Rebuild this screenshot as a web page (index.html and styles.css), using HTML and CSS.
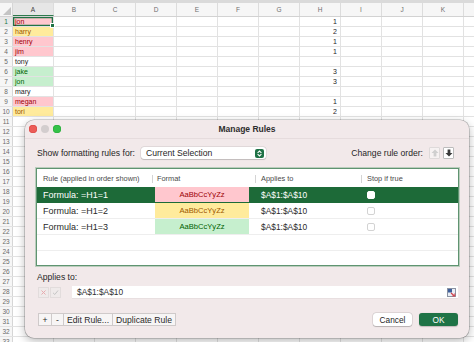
FILE: index.html
```html
<!DOCTYPE html>
<html>
<head>
<meta charset="utf-8">
<link rel="stylesheet" href="styles.css">
</head>
<body>
<div class="sheet">
  <div class="topbar"></div>
  <div class="colhead">
    <div class="corner"><svg width="9" height="9" viewBox="0 0 9 9"><path d="M9 1 L9 9 L1 9 Z" fill="#c4c4c4"/></svg></div>
    <div class="ch sel">A</div><div class="ch">B</div><div class="ch">C</div><div class="ch">D</div><div class="ch">E</div><div class="ch">F</div><div class="ch">G</div><div class="ch">H</div><div class="ch">I</div><div class="ch">J</div><div class="ch">K</div><div class="ch last"></div>
  </div>
  <div class="row"><div class="rn sel">1</div><div class="a red cur">jon</div><div class="h">1</div></div>
  <div class="row"><div class="rn">2</div><div class="a yel">harry</div><div class="h">2</div></div>
  <div class="row"><div class="rn">3</div><div class="a red">henry</div><div class="h">1</div></div>
  <div class="row"><div class="rn">4</div><div class="a red">jim</div><div class="h">1</div></div>
  <div class="row"><div class="rn">5</div><div class="a">tony</div></div>
  <div class="row"><div class="rn">6</div><div class="a grn">jake</div><div class="h">3</div></div>
  <div class="row"><div class="rn">7</div><div class="a grn">jon</div><div class="h">3</div></div>
  <div class="row"><div class="rn">8</div><div class="a">mary</div></div>
  <div class="row"><div class="rn">9</div><div class="a red">megan</div><div class="h">1</div></div>
  <div class="row"><div class="rn">10</div><div class="a yel">tori</div><div class="h">2</div></div>
  <div class="row"><div class="rn">11</div></div>
  <div class="row"><div class="rn">12</div></div>
  <div class="row"><div class="rn">13</div></div>
  <div class="row"><div class="rn">14</div></div>
  <div class="row"><div class="rn">15</div></div>
  <div class="row"><div class="rn">16</div></div>
  <div class="row"><div class="rn">17</div></div>
  <div class="row"><div class="rn">18</div></div>
  <div class="row"><div class="rn">19</div></div>
  <div class="row"><div class="rn">20</div></div>
  <div class="row"><div class="rn">21</div></div>
  <div class="row"><div class="rn">22</div></div>
  <div class="row"><div class="rn">23</div></div>
  <div class="row"><div class="rn">24</div></div>
  <div class="row"><div class="rn">25</div></div>
  <div class="row"><div class="rn">26</div></div>
  <div class="row"><div class="rn">27</div></div>
  <div class="row"><div class="rn">28</div></div>
  <div class="row"><div class="rn">29</div></div>
  <div class="row"><div class="rn">30</div></div>
  <div class="row"><div class="rn">31</div></div>
  <div class="row"><div class="rn">32</div></div>
  <div class="row"><div class="rn">33</div></div>
</div>

<div class="dialog">
  <div class="titlebar">
    <div class="lights"><span class="light red-l"></span><span class="light grey-l"></span><span class="light green-l"></span></div>
    <div class="title">Manage Rules</div>
  </div>
  <div class="body">
    <div class="toolbar">
      <span class="lbl">Show formatting rules for:</span>
      <div class="select">
        <span>Current Selection</span>
        <span class="stepper"><svg width="9" height="9" viewBox="0 0 9 9"><path d="M2.6 3.8 L4.5 2 L6.4 3.8 M2.6 5.2 L4.5 7 L6.4 5.2" fill="none" stroke="#fff" stroke-width="1.1"/></svg></span>
      </div>
      <div class="spacer"></div>
      <span class="lbl">Change rule order:</span>
      <span class="ord dis"><svg width="8" height="8" viewBox="0 0 8 8"><path d="M4 0.5 L7.5 4 H5.4 V7.5 H2.6 V4 H0.5 Z" fill="#cfcfcf"/></svg></span>
      <span class="ord"><svg width="8" height="8" viewBox="0 0 8 8"><path d="M4 7.5 L7.5 4 H5.4 V0.5 H2.6 V4 H0.5 Z" fill="#3a3a3a"/></svg></span>
    </div>

    <div class="table">
      <div class="thead">
        <div class="c c1">Rule (applied in order shown)</div>
        <div class="c c2"><span class="div"></span>Format</div>
        <div class="c c3"><span class="div"></span>Applies to</div>
        <div class="c c4"><span class="div"></span>Stop if true</div>
      </div>
      <div class="tr selected">
        <div class="c c1">Formula: =H1=1</div>
        <div class="c c2"><div class="fmt f-red">AaBbCcYyZz</div></div>
        <div class="c c3">$A$1:$A$10</div>
        <div class="c c4"><span class="chk"></span></div>
      </div>
      <div class="tr">
        <div class="c c1">Formula: =H1=2</div>
        <div class="c c2"><div class="fmt f-yel">AaBbCcYyZz</div></div>
        <div class="c c3">$A$1:$A$10</div>
        <div class="c c4"><span class="chk"></span></div>
      </div>
      <div class="tr">
        <div class="c c1">Formula: =H1=3</div>
        <div class="c c2"><div class="fmt f-grn">AaBbCcYyZz</div></div>
        <div class="c c3">$A$1:$A$10</div>
        <div class="c c4"><span class="chk"></span></div>
      </div>
      <div class="tr"></div>
      <div class="tr"></div>
    </div>

    <div class="applies-label">Applies to:</div>
    <div class="applies-row">
      <span class="mini"><svg width="7" height="7" viewBox="0 0 7 7"><path d="M1.5 1.5 L5.5 5.5 M5.5 1.5 L1.5 5.5" stroke="#e8a9ad" stroke-width="1"/></svg></span>
      <span class="mini"><svg width="7" height="7" viewBox="0 0 7 7"><path d="M1 3.8 L2.8 5.5 L6 1.5" fill="none" stroke="#c5c5c5" stroke-width="1"/></svg></span>
      <div class="field">
        <span>$A$1:$A$10</span>
        <svg width="9" height="9" viewBox="0 0 9 9"><rect x="0.5" y="0.5" width="8" height="8" fill="#e9eef6" stroke="#8c93a3"/><rect x="1" y="1" width="4" height="3.5" fill="#3f5f9a"/><path d="M4 5 L7.5 8" stroke="#d2404a" stroke-width="1.2"/><path d="M5.2 8 H7.8 V5.4" fill="none" stroke="#d2404a" stroke-width="0.9"/></svg>
      </div>
    </div>

    <div class="footer">
      <div class="group">
        <span class="gb gb-s">+</span><span class="gb gb-s">-</span><span class="gb">Edit Rule...</span><span class="gb">Duplicate Rule</span>
      </div>
      <div class="spacer"></div>
      <span class="btn cancel">Cancel</span>
      <span class="btn ok">OK</span>
    </div>
  </div>
</div>
</body>
</html>
```
FILE: styles.css
```css
* { box-sizing: border-box; }
html, body { margin: 0; padding: 0; }
body {
  width: 474px;
  height: 342px;
  overflow: hidden;
  position: relative;
  background: #fff;
  font-family: "Liberation Sans", Arial, sans-serif;
}

/* ---------- spreadsheet ---------- */
.sheet { font-size: 7px; color: #1d1d1d; }
.topbar { height: 3px; background: #dadada; }
.colhead {
  display: grid;
  grid-template-columns: 13px repeat(11, 41px) 1fr;
  height: 14px;
  background: #f6f6f6;
  border-bottom: 1px solid #d2d2d2;
}
.corner {
  border-right: 1px solid #d6d6d6;
  display: flex;
  align-items: flex-end;
  justify-content: flex-end;
  padding: 0 1px 1px 0;
}
.ch {
  border-right: 1px solid #dcdcdc;
  color: #6e6e6e;
  font-size: 6.5px;
  display: flex;
  align-items: center;
  justify-content: center;
}
.ch.sel { background: #e6e6e6; color: #3d3d3d; border-bottom: 1px solid #2f7a4d; }
.ch.last { border-right: none; }

.row {
  display: grid;
  grid-template-columns: 13px repeat(11, 41px) 1fr;
  height: 10px;
  border-bottom: 1px solid #e2e2e2;
  background-image: linear-gradient(to right, transparent 40px, #e2e2e2 40px);
  background-size: 41px 100%;
  background-position: 13px 0;
}
.rn {
  background: #f6f6f6;
  border-right: 1px solid #d6d6d6;
  color: #6a6a6a;
  font-size: 6.5px;
  line-height: 9px;
  text-align: center;
}
.rn.sel { color: #217346; background: #e8e8e8; }
.a {
  grid-column: 2;
  padding-left: 2px;
  line-height: 9px;
  border-right: 1px solid #e2e2e2;
  background: #fff;
}
.a.red { background: #ffc7ce; color: #9c0006; }
.a.yel { background: #ffeb9c; color: #9c5700; }
.a.grn { background: #c6efce; color: #006100; }
.a.cur { position: relative; box-shadow: inset 0 0 0 1.3px #217346; }
.a.cur::after {
  content: "";
  position: absolute;
  right: -2px;
  bottom: -2px;
  width: 3px;
  height: 3px;
  background: #217346;
  border: 0.5px solid #fff;
}
.h {
  grid-column: 9;
  text-align: right;
  padding-right: 4px;
  line-height: 9px;
  color: #1d1d1d;
}

/* ---------- dialog ---------- */
.dialog {
  position: absolute;
  left: 25px;
  top: 120px;
  width: 444px;
  height: 218px;
  background: #f2e9ea;
  border-radius: 9px;
  box-shadow: 0 0 0 0.6px rgba(0,0,0,0.28), 0 3px 10px rgba(0,0,0,0.28);
  font-size: 8.6px;
  color: #262626;
}
.titlebar {
  height: 19px;
  display: flex;
  align-items: center;
  position: relative;
  border-bottom: 1px solid #e6dcdd;
}
.lights { display: flex; gap: 4px; padding-left: 4px; }
.light { width: 8px; height: 8px; border-radius: 50%; display: block; }
.red-l { background: #ec5b57; box-shadow: inset 0 0 0 0.5px #d6423e; }
.grey-l { background: #d3cdce; }
.green-l { background: #35c148; box-shadow: inset 0 0 0 0.5px #23a834; }
.title {
  position: absolute;
  left: 0; right: 0;
  text-align: center;
  font-weight: bold;
  font-size: 8.5px;
  color: #2d2d2d;
  pointer-events: none;
}

.body { padding: 0 10px 0 11px; }
.toolbar {
  margin-top: 7px;
  height: 14px;
  display: flex;
  align-items: center;
  padding-right: 5px;
}
.lbl { margin-left: 1px; }
.select {
  margin-left: 6px;
  width: 125px;
  height: 12px;
  background: #fff;
  border-radius: 3px;
  box-shadow: 0 0 0 0.5px rgba(0,0,0,0.12), 0 0.5px 1px rgba(0,0,0,0.15);
  display: flex;
  align-items: center;
  justify-content: space-between;
  padding: 0 2px 0 5px;
}
.stepper {
  width: 9px;
  height: 9px;
  border-radius: 2px;
  background: #1f7246;
  display: flex;
}
.spacer { flex: 1; }
.ord {
  width: 11px;
  height: 12px;
  display: flex;
  align-items: center;
  justify-content: center;
  background: #fff;
  border: 1px solid #bcbcbc;
  border-radius: 1px;
  margin-left: 3px;
}
.ord:first-of-type { margin-left: 6px; }
.ord.dis { background: #f6f2f2; border-color: #dedada; margin-left: 6px; }

.table {
  margin-top: 8px;
  height: 98px;
  background: #fff;
  border: 1px solid #5f9471;
  box-shadow: 0 0 0 1px rgba(120,170,135,0.45);
  overflow: hidden;
}
.thead, .tr {
  display: grid;
  grid-template-columns: 115px 103px 106px 1fr;
}
.thead { height: 18px; font-size: 7.4px; color: #4a4a4a; }
.thead .c { display: flex; align-items: center; position: relative; padding-left: 6px; }
.thead .c2 { padding-left: 5px; }
.div {
  position: absolute;
  left: 0;
  top: 6px;
  width: 1px;
  height: 8px;
  background: #d4d4d4;
}
.tr {
  height: 16px;
  border-bottom: 1px solid #eeeeee;
  font-size: 8.6px;
  color: #2a2a2a;
}
.tr .c { display: flex; align-items: center; padding-left: 6px; }
.tr .c1 { font-size: 9px; }
.tr .c2 { padding-left: 3px; padding-right: 6px; }
.tr .c3 { font-size: 8.4px; }
.tr.selected { background: #1d6a38; color: #fff; border-bottom-color: #1d6a38; }
.fmt {
  width: 94px;
  height: 100%;
  display: flex;
  align-items: center;
  justify-content: center;
  font-size: 7.6px;
}
.f-red { background: #ffc7ce; color: #9c0006; }
.f-yel { background: #ffeb9c; color: #9c5700; }
.f-grn { background: #c6efce; color: #006100; }
.chk {
  width: 8px;
  height: 8px;
  border-radius: 2px;
  border: 0.7px solid #d3d3d3;
  background: #fff;
  display: block;
}
.selected .chk { border-color: #fff; }

.applies-label {
  margin-top: 6px;
  height: 10px;
  line-height: 10px;
  margin-left: 1px;
}
.applies-row {
  margin-top: 4px;
  height: 12px;
  display: flex;
  align-items: center;
}
.mini {
  width: 11px;
  height: 11px;
  background: #efeaea;
  border: 0.6px solid #e2dcdc;
  display: flex;
  align-items: center;
  justify-content: center;
}
.mini:first-child { margin-left: 2px; }
.mini + .mini { margin-left: 1px; }
.field {
  margin-left: 11px;
  margin-right: 1px;
  flex: 1;
  height: 12px;
  background: #fff;
  display: flex;
  align-items: center;
  justify-content: space-between;
  padding: 0 2px 0 5px;
  font-size: 8.4px;
  color: #2f2f2f;
  box-shadow: 0 0.5px 0 rgba(0,0,0,0.08);
}

.footer {
  margin-top: 15px;
  height: 13px;
  display: flex;
  align-items: center;
}
.group {
  margin-left: 2px;
  height: 13px;
  display: flex;
  border: 0.7px solid #cfcaca;
  background: #f7f5f5;
}
.gb {
  padding: 0 3px;
  display: flex;
  align-items: center;
  justify-content: center;
  border-left: 0.7px solid #cfcaca;
  color: #2a2a2a;
}
.gb:first-child { border-left: none; }
.gb-s { width: 12px; padding: 0; }
.btn {
  width: 39px;
  height: 13px;
  border-radius: 3px;
  display: flex;
  align-items: center;
  justify-content: center;
  font-size: 8.3px;
}
.cancel {
  background: #fff;
  box-shadow: 0 0 0 0.5px rgba(0,0,0,0.14), 0 0.6px 1px rgba(0,0,0,0.18);
  color: #262626;
}
.ok {
  margin-left: 7px;
  margin-right: 1px;
  background: #1f7346;
  color: #fff;
  box-shadow: 0 0.6px 1px rgba(0,0,0,0.2);
}
```
